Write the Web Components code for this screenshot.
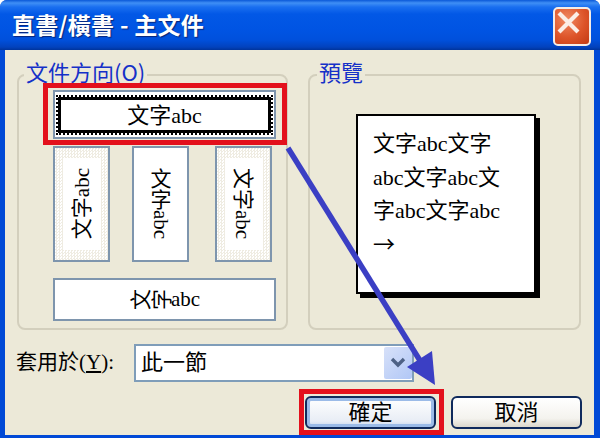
<!DOCTYPE html>
<html lang="zh-Hant">
<head>
<meta charset="utf-8">
<title>直書/橫書</title>
<style>
  html, body { margin: 0; padding: 0; background: #fff; width: 600px; height: 440px; overflow: hidden; }
  body { font-family: "Noto Sans CJK TC", "Liberation Serif", serif; }
  .col { display: flex; flex-direction: column; }
  .verts { display: flex; margin-top: 7px; }
  .verts orient-option + orient-option { margin-left: 22px; }
  .verts orient-option:last-child { margin-left: 26px; }
  .latin { font-family: "Liberation Serif", serif; line-height: 0; }
</style>
</head>
<body>

<template id="dialog-tpl">
  <style>
    :host {
      display: flex; flex-direction: column; position: relative; box-sizing: border-box;
      width: 600px; height: 438px; background: #0049d6; border-radius: 7px 7px 0 0; overflow: hidden;
    }
    .title {
      height: 50px; flex: none; box-sizing: border-box; display: flex; align-items: center;
      justify-content: space-between; padding: 3px 9px 0 12px;
      background: linear-gradient(#0a58d8 0, #3f8ff5 3px, #1a6ff0 7px, #0258e6 14px, #0054e3 30px, #0050dc 40px, #0242bd 47px, #00349c 50px);
    }
    .title span {
      color: #fff; font: 700 23px/1 "Noto Sans CJK TC", sans-serif; letter-spacing: .3px;
      text-shadow: 1px 1px 1px #06257a; margin-top: -4px;
    }
    .body {
      flex: 1; margin: 0 6px 3px 5px; background: #ece9d8; display: flex; flex-direction: column;
      padding: 24px 12px 0 12px;
    }
    .groups { display: flex; gap: 20px; }
    .apply { display: flex; align-items: center; margin-top: 14px; }
    .buttons { display: flex; justify-content: flex-end; gap: 15px; margin-top: 14px; }
    close-button { display: block; }
  </style>
  <div class="title"><span id="caption"></span><close-button></close-button></div>
  <div class="body">
    <div class="groups"><slot name="groups"></slot></div>
    <div class="apply"><slot name="apply"></slot></div>
    <div class="buttons"><slot name="buttons"></slot></div>
  </div>
  <slot name="overlay"></slot>
</template>

<template id="close-tpl">
  <style>
    :host {
      display: flex; align-items: center; justify-content: center; box-sizing: border-box;
      width: 38px; height: 39px; border: 2px solid #f4ece6; border-radius: 5px;
      background: radial-gradient(circle at 35% 30%, #f08a62, #dd5429 55%, #c23a14);
    }
    svg { display: block; }
  </style>
  <svg width="27" height="27" viewBox="0 0 27 27"><path d="M4 4 L23 23 M23 4 L4 23" stroke="#fbeee6" stroke-width="4.2" fill="none"/></svg>
</template>

<template id="group-tpl">
  <style>
    :host {
      display: block; position: relative; box-sizing: border-box; height: 256px;
      border: 2px solid #d3cfbd; border-radius: 8px;
    }
    .legend {
      position: absolute; top: -16px; left: var(--legend-left, 7px); padding: 0 2px; background: #ece9d8; color: #1530c8;
      font: 400 22px/22px "Noto Sans CJK TC", "Liberation Serif", serif; white-space: nowrap;
    }
  </style>
  <div class="legend" id="legend"></div>
  <slot></slot>
</template>

<template id="option-tpl">
  <style>
    :host {
      display: flex; align-items: center; justify-content: center; position: relative; box-sizing: border-box;
      border: 2px solid #7e95ad; background: #fff; color: #000;
      font: 400 21px/1 "Noto Sans CJK TC", serif; white-space: nowrap;
    }
    :host([hatched]) {
      background: repeating-conic-gradient(#efece2 0 25%, #fff 0 50%) 0 0 / 3px 3px;
    }
    :host([hatched]) .inner { background: #fff; width: 38px; height: 92px; }
    :host([selected]) .inner {
      flex: 1; align-self: stretch; margin: 5px 3px 4px; box-sizing: border-box; padding: 0 0 5px;
      background: #fff; border: 3px solid #000; outline: 2px dotted #000; font-size: 22px;
    }
    :host([selected])::after {
      content: ""; position: absolute; left: -12px; right: -13px; top: -9px; bottom: -8px;
      border: 5px solid #e3101c; pointer-events: none;
    }
    .latin { font-family: "Liberation Serif", serif; }
    .inner { display: flex; align-items: center; justify-content: center; }
    .rot-left { writing-mode: vertical-rl; text-orientation: sideways; transform: rotate(180deg); }
    .vert-mixed { writing-mode: vertical-rl; text-orientation: mixed; }
    .vert-side { writing-mode: vertical-rl; text-orientation: sideways; }
    .turned { display: inline-block; transform: rotate(-90deg); }
  </style>
  <div class="inner"><slot></slot></div>
</template>

<template id="page-tpl">
  <style>
    :host {
      display: block; box-sizing: border-box; width: 180px; height: 180px; margin: 38px 0 0 46px;
      background: #fff; border: 2px solid #000; box-shadow: 4px 4px 0 #000;
      padding: 9px 8px 0 15px; color: #000; font: 400 22px/33.5px "Noto Sans CJK TC", serif;
    }
  </style>
  <slot></slot>
</template>

<template id="combo-tpl">
  <style>
    :host {
      display: flex; align-items: center; justify-content: space-between; box-sizing: border-box;
      width: 280px; height: 38px; padding: 0 0 0 5px; background: #fff;
      border: 2px solid #7f9db9; color: #000; font: 400 22px/1 "Noto Sans CJK TC", sans-serif;
    }
    .label { padding-bottom: 7px; }
    .btn {
      width: 28px; height: 32px; margin: 0 0 0 auto; background: linear-gradient(135deg, #d7e1f9, #b1c7f6); display: flex;
      align-items: center; justify-content: center; border-radius: 2px;
    }
    svg { display: block; }
  </style>
  <div class="label"><slot></slot></div>
  <div class="btn"><svg width="16" height="12" viewBox="0 0 16 12"><path d="M2 2 L8 8 L14 2" stroke="#4d6185" stroke-width="3.4" fill="none"/></svg></div>
</template>

<template id="button-tpl">
  <style>
    :host {
      display: flex; align-items: center; justify-content: center; position: relative; box-sizing: border-box;
      width: 131px; height: 33px; padding-bottom: 6px; border: 2px solid #0f2a5c; border-radius: 6px; color: #000;
      background: linear-gradient(#fff, #f4f3ee 70%, #dcd8cc); font: 400 22px/1 "Noto Sans CJK TC", sans-serif;
    }
    :host([default]) { box-shadow: inset 0 0 0 3px #9bbbe8; background: linear-gradient(#fff, #e8edf5 80%, #c5d5ee); }
    :host([default])::after {
      content: ""; position: absolute; left: -8px; right: -10px; top: -9px; bottom: -8px;
      border: 5px solid #e3101c; pointer-events: none;
    }
  </style>
  <slot></slot>
</template>

<template id="arrow-tpl">
  <style>
    :host { display: block; position: absolute; left: 0; top: 0; width: 600px; height: 438px; pointer-events: none; }
    svg { display: block; }
  </style>
  <svg width="600" height="438" viewBox="0 0 600 438">
    <path d="M288 148 L424 367" stroke="#3b3fc4" stroke-width="5.5" fill="none"/>
    <path d="M435 385 L407 367 L432 351 Z" fill="#3b3fc4"/>
  </svg>
</template>

<xp-dialog caption="直書/橫書 - 主文件">
  <xp-group slot="groups" legend="文件方向(O)" style="width:271px;--legend-left:5px">
    <div class="col" style="padding:14px 0 0 34px;width:223px">
      <orient-option selected style="height:49px"><span>文字<span class="latin">abc</span></span></orient-option>
      <div class="verts">
        <orient-option hatched style="width:57px;height:116px" variant="rot-left">文字abc</orient-option>
        <orient-option style="width:57px;height:116px" variant="vert-mixed">文字abc</orient-option>
        <orient-option hatched style="width:57px;height:116px" variant="vert-side">文字abc</orient-option>
      </div>
      <orient-option style="height:43px;margin-top:16px" variant="turned">文字</orient-option>
    </div>
  </xp-group>
  <xp-group slot="groups" legend="預覽" style="width:273px;--legend-left:7px">
    <preview-page>文字<span class="latin">abc</span>文字<br><span class="latin">abc</span>文字<span class="latin">abc</span>文<br>字<span class="latin">abc</span>文字<span class="latin">abc</span><br>→</preview-page>
  </xp-group>
  <span slot="apply" style="color:#000;font:400 21px/1 'Noto Sans CJK TC',serif;width:118px;white-space:nowrap;margin-left:-1px;padding-bottom:6px">套用於<span class="latin">(<u>Y</u>):</span></span>
  <xp-combo slot="apply">此一節</xp-combo>
  <xp-button slot="buttons" default>確定</xp-button>
  <xp-button slot="buttons">取消</xp-button>
  <annot-arrow slot="overlay"></annot-arrow>
</xp-dialog>

<script>
  // stamp a template into an open shadow root
  function stamp(el, id) {
    const root = el.attachShadow({ mode: 'open' });
    root.appendChild(document.getElementById(id).content.cloneNode(true));
    return root;
  }

  class XpDialog extends HTMLElement {
    constructor() { super(); this.root = stamp(this, 'dialog-tpl'); }
    connectedCallback() { this.root.getElementById('caption').textContent = this.getAttribute('caption'); }
  }
  class CloseButton extends HTMLElement {
    constructor() { super(); stamp(this, 'close-tpl'); }
  }
  class XpGroup extends HTMLElement {
    constructor() { super(); this.root = stamp(this, 'group-tpl'); }
    connectedCallback() { this.root.getElementById('legend').textContent = this.getAttribute('legend'); }
  }
  class OrientOption extends HTMLElement {
    constructor() { super(); this.root = stamp(this, 'option-tpl'); }
    connectedCallback() {
      const variant = this.getAttribute('variant');
      if (!variant) return;
      const text = this.textContent;
      this.textContent = '';
      const inner = this.root.querySelector('.inner');
      if (variant === 'turned') {
        // cjk glyphs lie on their side, latin stays upright
        inner.innerHTML = '<span class="turned">文</span><span class="turned">字</span><span class="latin">abc</span>';
      } else {
        const cjk = text.slice(0, 2), latin = text.slice(2);
        inner.innerHTML = `<span class="${variant}">${cjk}<span class="latin">${latin}</span></span>`;
      }
    }
  }
  class PreviewPage extends HTMLElement {
    constructor() { super(); stamp(this, 'page-tpl'); }
  }
  class XpCombo extends HTMLElement {
    constructor() { super(); stamp(this, 'combo-tpl'); }
  }
  class XpButton extends HTMLElement {
    constructor() { super(); stamp(this, 'button-tpl'); }
  }
  class AnnotArrow extends HTMLElement {
    constructor() { super(); stamp(this, 'arrow-tpl'); }
  }

  customElements.define('close-button', CloseButton);
  customElements.define('xp-dialog', XpDialog);
  customElements.define('xp-group', XpGroup);
  customElements.define('orient-option', OrientOption);
  customElements.define('preview-page', PreviewPage);
  customElements.define('xp-combo', XpCombo);
  customElements.define('xp-button', XpButton);
  customElements.define('annot-arrow', AnnotArrow);
</script>
</body>
</html>
